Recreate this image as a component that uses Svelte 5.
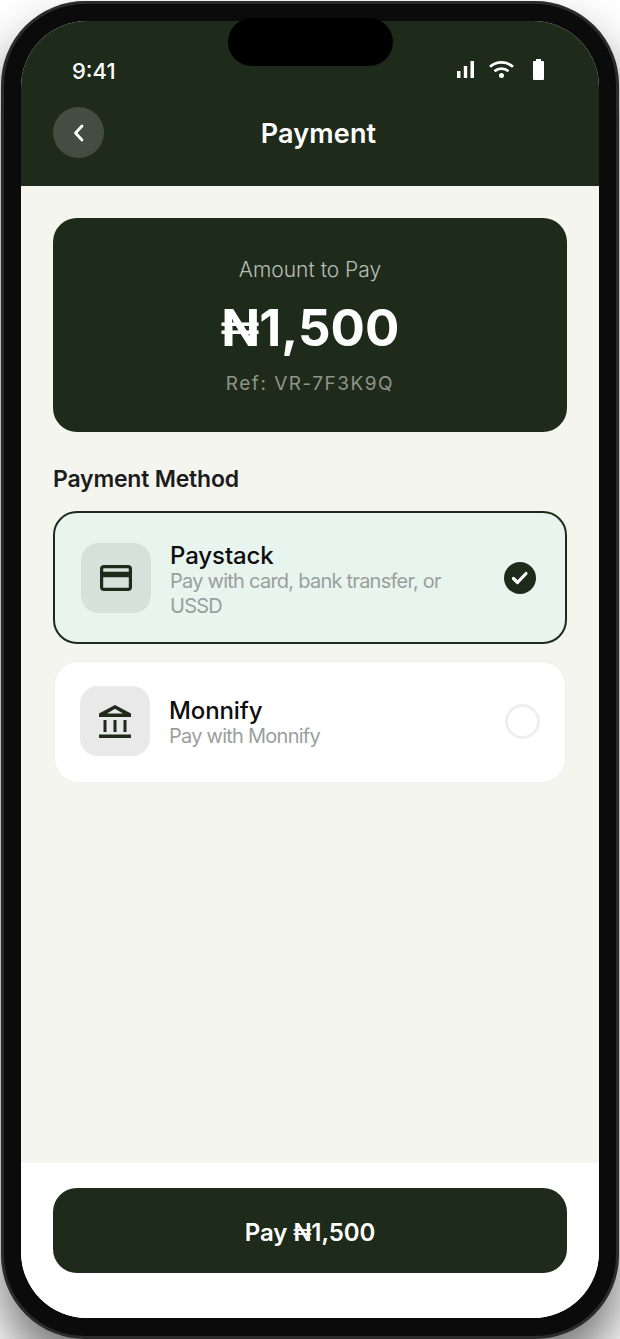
<script>
  const methods = [
    { name: "Paystack", desc: "Pay with card, bank transfer, or USSD", selected: true },
    { name: "Monnify", desc: "Pay with Monnify", selected: false }
  ];
</script>

<style>
  :global(body) {
    margin: 0;
    background: #fff;
    overflow: hidden;
  }

  .page {
    height: 1339px;
    padding: 1px 1px 0 1px;
    box-sizing: border-box;
    font-family: Inter, "Noto Sans", sans-serif;
    overflow: hidden;
  }

  .phone {
    position: relative;
    height: 1338px;
    box-sizing: border-box;
    padding: 17px 17px 18px;
    background: #0b0b0b;
    border: 3px solid #2b2b2b;
    border-radius: 84px;
    box-shadow: 0 30px 50px rgba(0, 0, 0, 0.55);
  }

  .screen {
    height: 100%;
    display: flex;
    flex-direction: column;
    background: #f4f5ef;
    border-radius: 66px;
    overflow: hidden;
  }

  .island {
    position: absolute;
    top: 14px;
    left: 224px;
    width: 165px;
    height: 48px;
    background: #000;
    border-radius: 24px;
  }

  header {
    height: 165px;
    flex: none;
    box-sizing: border-box;
    padding: 0 32px;
    background: #1f2b1a;
    color: #fff;
  }

  .status {
    display: flex;
    justify-content: space-between;
    align-items: center;
    height: 86px;
    padding: 14px 23px 0 19px;
    box-sizing: border-box;
  }

  .time {
    font-size: 22px;
    font-weight: 500;
  }

  .status-icons {
    display: flex;
    align-items: center;
    gap: 15px;
    margin-top: -3px;
  }

  .battery {
    margin-left: 4px;
  }

  .nav {
    position: relative;
    display: flex;
    justify-content: center;
    align-items: center;
    height: 51px;
  }

  .back {
    position: absolute;
    left: 0;
    top: 0;
    width: 51px;
    height: 51px;
    border-radius: 50%;
    background: #434d41;
    display: flex;
    align-items: center;
    justify-content: center;
  }

  .nav h1 {
    margin: 2px 0 0 17px;
    font-size: 27px;
    font-weight: 600;
    letter-spacing: 0.15px;
  }

  main {
    flex: 1;
    padding: 32px 32px 0;
  }

  .amount {
    height: 214px;
    box-sizing: border-box;
    padding-top: 39px;
    background: #1f2b1a;
    border-radius: 24px;
    text-align: center;
  }

  .label {
    font-size: 21px;
    font-weight: 300;
    line-height: 26px;
    color: #b9bdb6;
  }

  .value {
    margin-top: 12px;
    font-size: 51px;
    font-weight: 700;
    line-height: 66px;
    color: #fff;
  }

  .ref {
    margin-top: 11px;
    font-size: 19px;
    line-height: 24px;
    letter-spacing: 1.5px;
    color: #8f948b;
  }

  h2 {
    margin: 33px 0 18px;
    font-size: 23px;
    font-weight: 600;
    line-height: 28px;
    letter-spacing: -0.2px;
    color: #1c1c1c;
  }

  .method {
    display: flex;
    align-items: center;
    gap: 19px;
    margin-bottom: 17px;
    margin-inline: 1px;
    padding: 0 25px 2px;
    height: 122px;
    box-sizing: border-box;
    background: #fff;
    border: 1px solid #eeeeee;
    border-radius: 24px;
  }

  .method.selected {
    height: 133px;
    margin-inline: 0;
    padding: 0 29px 0 26px;
    background: #e8f4ee;
    border: 2px solid #1f2b1a;
  }

  .icon-box {
    flex: none;
    width: 70px;
    height: 70px;
    border-radius: 18px;
    background: #e9e9e9;
    display: flex;
    align-items: center;
    justify-content: center;
  }

  .selected .icon-box {
    background: #d5e1da;
  }

  .info {
    flex: 1;
    padding-top: 4px;
  }

  .selected .info {
    padding-top: 6px;
  }

  .name {
    font-size: 24px;
    font-weight: 550;
    line-height: 27px;
    letter-spacing: -0.1px;
    color: #0d0d0d;
  }

  .desc {
    font-size: 20px;
    line-height: 25px;
    letter-spacing: -0.75px;
    color: #9a9f9c;
  }

  .check {
    flex: none;
    width: 32px;
    height: 32px;
    border-radius: 50%;
    background: #1f2b1a;
    display: flex;
    align-items: center;
    justify-content: center;
  }

  .radio {
    flex: none;
    width: 35px;
    height: 35px;
    box-sizing: border-box;
    border: 3px solid #eeeeee;
    border-radius: 50%;
  }

  footer {
    flex: none;
    height: 155px;
    box-sizing: border-box;
    padding: 25px 32px 0;
    background: #fff;
  }

  .pay {
    display: block;
    width: 100%;
    height: 85px;
    padding-top: 4px;
    border: none;
    border-radius: 24px;
    background: #1f2b1a;
    color: #fff;
    font-family: inherit;
    font-size: 24px;
    font-weight: 600;
    letter-spacing: -0.1px;
  }
</style>

<div class="page">
  <div class="phone">
    <div class="screen">
      <header>
        <div class="status">
          <span class="time">9:41</span>
          <div class="status-icons">
            <svg width="17" height="17" viewBox="0 0 17 17" fill="#fff">
              <rect x="0" y="10" width="3.500" height="7" />
              <rect x="6.800" y="5" width="3.400" height="12" />
              <rect x="13.500" y="0" width="3.500" height="17" />
            </svg>
            <svg width="25" height="17" viewBox="0 0 25 17" fill="none" stroke="#fff" stroke-width="2.800">
              <path d="M1 5.800C7.500 0 17.500 0 24 5.800" />
              <path d="M5.500 10.200C9.500 6.800 15.500 6.800 19.500 10.200" />
              <circle cx="12.500" cy="14.500" r="2.500" fill="#fff" stroke="none" />
            </svg>
            <svg class="battery" width="11" height="21" viewBox="0 0 11 21" fill="#fff">
              <path d="M3 0h5v2h2a1 1 0 0 1 1 1v17a1 1 0 0 1-1 1h-9a1 1 0 0 1-1-1v-17a1 1 0 0 1 1-1h2z" />
            </svg>
          </div>
        </div>
        <div class="nav">
          <div class="back">
            <svg width="14" height="20" viewBox="0 0 14 20" fill="none" stroke="#fff" stroke-width="2.800" stroke-linecap="round" stroke-linejoin="round">
              <path d="M10 3L3.500 10L10 17" />
            </svg>
          </div>
          <h1>Payment</h1>
        </div>
      </header>

      <main>
        <section class="amount">
          <div class="label">Amount to Pay</div>
          <div class="value">₦1,500</div>
          <div class="ref">Ref: VR-7F3K9Q</div>
        </section>

        <h2>Payment Method</h2>

        {#each methods as method}
          <div class="method" class:selected={method.selected}>
            <div class="icon-box">
              {#if method.selected}
                <svg width="32" height="26" viewBox="0 0 32 26" fill="none" stroke="#1f2b1a">
                  <rect x="1.600" y="1.600" width="28.800" height="22.800" rx="2.500" stroke-width="3.200" />
                  <path d="M1.500 9.500h29" stroke-width="5.500" />
                </svg>
              {:else}
                <svg width="32" height="33" viewBox="0 0 32 33" fill="#1f2b1a">
                  <path d="M16 0L32 8.500V12H0V8.500zM16 3.800L8 8.500h16z" fill-rule="evenodd" />
                  <rect x="4.500" y="15" width="3" height="12" />
                  <rect x="14.500" y="15" width="3" height="12" />
                  <rect x="24.500" y="15" width="3" height="12" />
                  <rect x="0" y="29.500" width="32" height="3.500" />
                </svg>
              {/if}
            </div>
            <div class="info">
              <div class="name">{method.name}</div>
              <div class="desc">{method.desc}</div>
            </div>
            {#if method.selected}
              <div class="check">
                <svg width="20" height="16" viewBox="0 0 20 16" fill="none" stroke="#fff" stroke-width="3.200" stroke-linecap="round" stroke-linejoin="round">
                  <path d="M3.500 8.500L7.500 12.500L16 3.500" />
                </svg>
              </div>
            {:else}
              <div class="radio"></div>
            {/if}
          </div>
        {/each}
      </main>

      <footer>
        <button class="pay">Pay ₦1,500</button>
      </footer>
    </div>
    <div class="island"></div>
  </div>
</div>
